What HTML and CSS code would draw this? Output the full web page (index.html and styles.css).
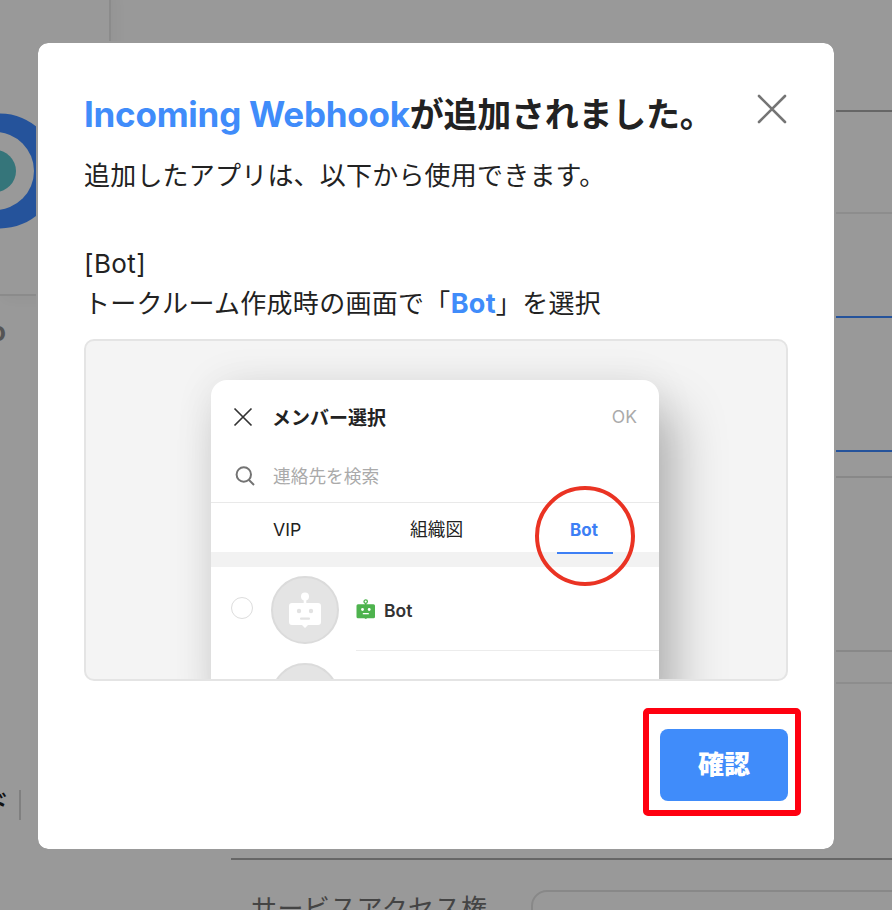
FILE: index.html
```html
<!DOCTYPE html>
<html lang="ja">
<head>
<meta charset="utf-8">
<title>Incoming Webhook</title>
<link rel="stylesheet" href="styles.css">
</head>
<body>
<div class="page">
  <aside class="side">
    <div class="app-card">
      <svg class="app-logo" width="58" height="116" viewBox="0 0 58 116"><circle cx="0" cy="58" r="57.500" fill="#25539b"/><circle cx="-5" cy="58" r="39" fill="#999"/><circle cx="-5" cy="58" r="21" fill="#35757a"/></svg>
    </div>
    <div class="app-name"><span>o</span></div>
    <div class="side-links"><span class="link-text">ド</span><span class="link-divider"></span></div>
  </aside>
  <main class="form">
    <div class="row row-head"></div>
    <div class="row row-first"></div>
    <div class="row row-gap"></div>
    <div class="row field-blue"></div>
    <div class="row row-space"></div>
    <div class="row field-gray"></div>
    <div class="row row-sep"></div>
    <div class="row row-last"></div>
    <div class="access"><span class="access-label">サービスアクセス権</span><span class="access-input"></span></div>
  </main>
</div>
<div class="overlay">
  <section class="modal">
    <header class="modal-head">
      <h1><span class="brand">Incoming Webhook</span><span>が追加されました。</span></h1>
      <svg class="close" width="30" height="30" viewBox="0 0 30 30"><path d="M2 2 28 28M28 2 2 28" stroke="#757575" stroke-width="2.600" stroke-linecap="round"/></svg>
    </header>
    <p class="lead">追加したアプリは、以下から使用できます。</p>
    <p class="kind">[Bot]</p>
    <p class="where">トークルーム作成時の画面で「<b>Bot</b>」を選択</p>
    <div class="preview">
      <div class="panel">
        <div class="panel-head">
          <svg width="20" height="20" viewBox="0 0 20 20"><path d="M1.500 1.500 18.500 18.500M18.500 1.500 1.500 18.500" stroke="#333" stroke-width="1.700"/></svg>
          <strong>メンバー選択</strong><span class="ok">OK</span>
        </div>
        <div class="search">
          <svg width="20" height="20" viewBox="0 0 20 20" fill="none" stroke="#737373" stroke-width="2"><circle cx="8.800" cy="8.500" r="7.200"/><path d="m14 14 5 5"/></svg>
          <span>連絡先を検索</span>
        </div>
        <div class="tabs"><span class="vip">VIP</span><span class="org">組織図</span><span class="bot">Bot<i class="ring"></i></span></div>
        <div class="band"></div>
        <div class="member">
          <i class="radio"></i>
          <span class="avatar"><svg width="32" height="36" viewBox="0 0 32 36" fill="#fff"><circle cx="16" cy="4.500" r="4"/><path d="M14.700 7h2.600v5h-2.600zM3 11h26q3 0 3 3v16q0 3-3 3H19l-3 3-3-3H3q-3 0-3-3V14q0-3 3-3z"/><circle cx="10" cy="19" r="2.200" fill="#e2e2e2"/><circle cx="22" cy="19" r="2.200" fill="#e2e2e2"/><rect x="11" y="25.500" width="10" height="2.200" rx="1" fill="#e2e2e2"/></svg></span>
          <div class="member-name">
            <svg width="20" height="20" viewBox="0 0 20 20" fill="#4eb34e"><circle cx="9.700" cy="2.600" r="1.700" fill="none" stroke="#4eb34e" stroke-width="1.300"/><path d="M9 4h1.400v2H9zM2 5.300h15.500q1.500 0 1.500 1.500v11q0 1.500-1.500 1.500h-6.300L9.800 20l-1.400-.7H2q-1.500 0-1.500-1.500v-11q0-1.500 1.500-1.500z"/><g fill="#fff"><circle cx="6.500" cy="10.500" r="1.400"/><circle cx="13.200" cy="10.500" r="1.400"/><path d="M6.800 14h6v1.300h-6z"/></g></svg>
            <b>Bot</b>
          </div>
        </div>
        <div class="member next"><span class="avatar"></span></div>
      </div>
    </div>
    <footer><div class="marker"><button>確認</button></div></footer>
  </section>
</div>
</body>
</html>
```
FILE: styles.css
```css
* { box-sizing: border-box; }
html, body { margin: 0; height: 910px; overflow: hidden; }
body { background: #999; color: #222; font-family: Inter, "Noto Sans CJK JP", sans-serif; font-size: 26px; }
h1, p { margin: 0; }

.page { display: grid; grid-template-columns: 231px 1fr; height: 910px; overflow: hidden; }
.side { overflow: hidden; }
.app-card { width: 111px; height: 316px; margin-top: -20px; padding-top: 131px; border: 2px solid #8b8b8b; border-left: 0; border-radius: 0 20px 20px 0; box-shadow: 4px 2px 14px rgba(0,0,0,.04); }
.app-logo { display: block; }
.app-name { height: 32px; margin-top: 20px; display: flex; justify-content: flex-end; width: 6px; color: #555; font-weight: 700; font-size: 26px; line-height: 32px; }
.side-links { display: flex; justify-content: flex-end; align-items: center; width: 21px; height: 30px; margin-top: 442px; gap: 10px; }
.link-text { font-weight: 500; font-size: 26px; line-height: 28px; height: 30px; color: #111; }
.link-divider { flex: none; width: 2px; height: 30px; background: #808080; }

.row { border-bottom: 2px solid #888; }
.row-head { height: 112px; border-color: #666; }
.row-first { height: 102px; border-color: #8d8d8d; }
.row-gap { height: 102px; border: 0; }
.field-blue { height: 136px; border: 2px solid #25539b; border-width: 2px 0; }
.row-space { height: 26px; }
.field-gray { height: 174px; }
.row-sep { height: 32px; border-color: #8d8d8d; }
.row-last { height: 176px; border-color: #666; }
.access { display: flex; height: 200px; padding: 30px 0 0 20px; }
.access-label { flex: none; width: 280px; margin-top: 2px; line-height: 34px; letter-spacing: .4px; color: #444; }
.access-input { flex: none; width: 420px; height: 80px; border: 2px solid #888; border-radius: 16px; }

.overlay { position: absolute; inset: 0; padding: 41px 0 0 36px; }
.modal { width: 800px; height: 810px; padding: 46px; border: 2px solid #999; border-radius: 12px; background: #fff padding-box; }
.modal-head { display: flex; justify-content: space-between; height: 65px; }
h1 { margin-top: -1px; font-size: 34px; line-height: 52px; font-weight: 700; letter-spacing: -.25px; white-space: nowrap; }
.brand { color: #408cfa; font-size: 35px; font-weight: 700; letter-spacing: -.25px; }
.close { margin: 5px 1px 0 0; }
.lead { height: 92px; line-height: 44px; letter-spacing: .2px; }
.kind { height: 36px; line-height: 36px; letter-spacing: .4px; }
.where { height: 57px; line-height: 44px; letter-spacing: .3px; white-space: nowrap; }
.where b { color: #408cfa; font-size: 27px; line-height: 1; }
.preview { height: 342px; padding: 39px 0 0 125px; border: 2px solid #e4e4e4; border-radius: 10px; background: #f4f4f4; overflow: hidden; }
.panel { width: 448px; height: 320px; border-radius: 16px 16px 0 0; background: #fff; box-shadow: 18px 30px 50px rgba(0,0,0,.25), 0 0 40px rgba(0,0,0,.07); font-size: 18px; }
.panel-head { display: flex; align-items: center; height: 73px; padding: 0 22px; }
.panel-head strong { margin-left: 19px; font-size: 19px; }
.ok { margin-left: auto; color: #aaa; font-size: 17.500px; }
.search { display: flex; align-items: center; height: 50px; padding: 0 0 4px 24px; gap: 18px; color: #aaa; font-size: 17.700px; border-bottom: 1px solid #e9e9e9; }
.search span { margin-top: -2px; }
.tabs { display: flex; height: 49px; padding-left: 62px; line-height: 54px; font-size: 17.700px; }
.vip { width: 137px; }
.org { width: 147px; }
.bot { position: relative; width: 56px; height: 51px; padding-right: 2px; border-bottom: 2px solid #3d7ff5; text-align: center; color: #3d7ff5; font-weight: 700; font-size: 17px; }
.ring { position: absolute; left: -22px; top: -17px; width: 100px; height: 100px; border: 4px solid #ea3323; border-radius: 50%; }
.band { height: 15px; background: #f2f2f2; }
.member { display: flex; height: 87px; padding: 9px 0 0 20px; }
.radio { width: 22px; height: 22px; margin-top: 21px; border: 1px solid #ddd; border-radius: 50%; }
.avatar { display: flex; align-items: center; justify-content: center; width: 68px; height: 68px; margin-left: 18px; border: 2px solid #dbdbdb; border-radius: 50%; background: #e4e4e4; }
.member-name { display: flex; flex: 1; height: 75px; margin-left: 17px; padding: 23px 0 0; gap: 8px; border-bottom: 1px solid #ececec; }
.member-name b { line-height: 24px; font-weight: 600; font-size: 17.500px; color: #333; }
.next { padding-left: 42px; }
footer { display: flex; justify-content: flex-end; margin: 27px -13px 0 0; }
.marker { padding: 15px 7px 9px 11px; border: 6px solid #ff0010; border-radius: 5px; }
button { display: block; width: 128px; height: 72px; padding: 0; border: 0; border-radius: 8px; background: #408cfa; color: #fff; font: 900 26px/68px "Noto Sans CJK JP", sans-serif; padding-bottom: 4px; }
```
